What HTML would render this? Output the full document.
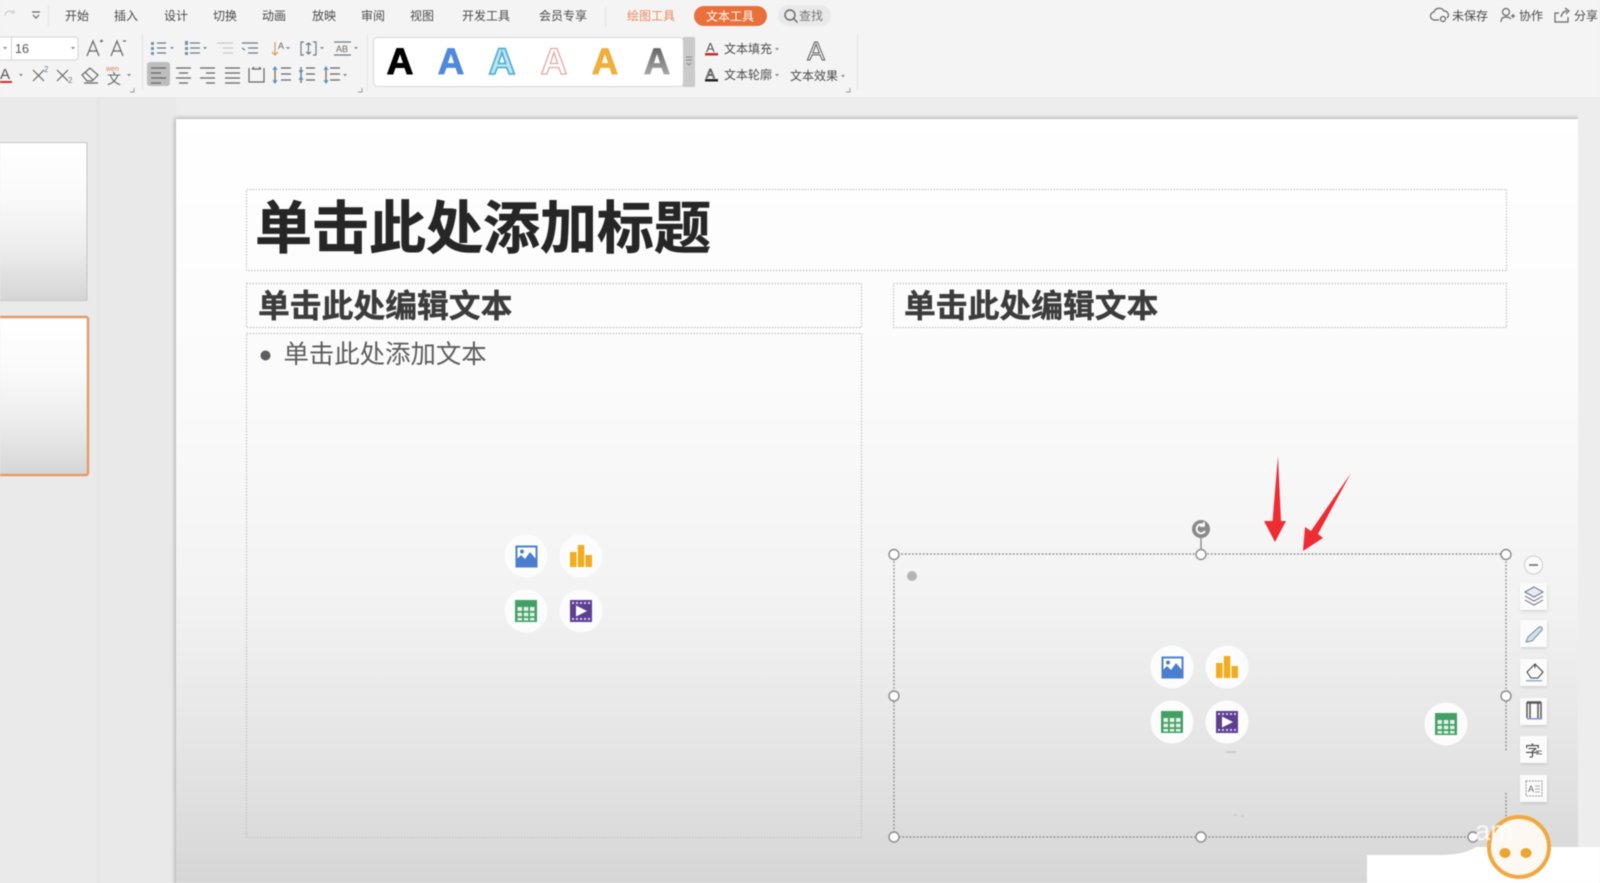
<!DOCTYPE html>
<html><head><meta charset="utf-8">
<style>
html,body{margin:0;padding:0;width:1600px;height:883px;overflow:hidden;background:#ededed}
svg{display:block;filter:blur(.45px)}
text{font-family:"Liberation Sans","Noto Sans CJK SC",sans-serif}
.t{font-size:12px;fill:#4a4a4a}
.i{fill:none;stroke:#666;stroke-width:1.2}
.b{fill:none;stroke:#6d7a86;stroke-width:1.2}
.c{fill:#888}
.d{fill:none;stroke:#c2c2c2;stroke-width:1.2;stroke-dasharray:1.5 1.5}
.e{fill:none;stroke:#808080;stroke-width:1.2;stroke-dasharray:1.8 1.8}
.h{fill:#fff;stroke:#8c8c8c;stroke-width:1.4}
</style></head><body>
<svg width="1600" height="883" viewBox="0 0 1600 883" xmlns="http://www.w3.org/2000/svg">
<defs>
<linearGradient id="sl" x1="0" y1="0" x2="0" y2="1"><stop offset="0" stop-color="#fff"/><stop offset=".35" stop-color="#fbfbfb"/><stop offset=".62" stop-color="#f3f3f3"/><stop offset=".82" stop-color="#e5e5e5"/><stop offset="1" stop-color="#d6d6d6"/></linearGradient>
<linearGradient id="th" x1="0" y1="0" x2="0" y2="1"><stop offset="0" stop-color="#fff"/><stop offset=".35" stop-color="#fafafa"/><stop offset=".7" stop-color="#ebebeb"/><stop offset="1" stop-color="#d5d5d5"/></linearGradient>
<linearGradient id="ga" x1="0" y1="0" x2="0" y2="1"><stop offset="0" stop-color="#555"/><stop offset="1" stop-color="#bbb"/></linearGradient>
<filter id="sf" x="-2%" y="-2%" width="104%" height="104%"><feGaussianBlur stdDeviation="2"/></filter>
<filter id="bl"><feGaussianBlur stdDeviation=".25"/></filter>
<filter id="bs" x="-30%" y="-30%" width="160%" height="160%"><feGaussianBlur stdDeviation="1.5"/></filter>
<g id="pic"><rect x="-9.500" y="-9.500" width="20" height="20" fill="#fff" stroke="#4a7fd0" stroke-width="2"/><path d="M-9 10V3L-5 -1L-1 3L4 -4L10 3V10Z" fill="#4a7fd0"/><circle cx="-4" cy="-4.500" r="2" fill="#4a7fd0"/></g>
<g id="bar" fill="#f2ac1e"><rect x="-11" y="-4" width="6.500" height="15"/><rect x="-3.200" y="-11" width="6.500" height="22"/><rect x="4.500" y="-1" width="6.500" height="12"/></g>
<g id="tbl"><rect x="-11" y="-11" width="22" height="22" fill="#43a065"/><path d="M-8.500 -4h4.500v4h-4.500zM-2.200 -4h4.500v4h-4.500zM4 -4h4.500v4h-4.500zM-8.500 1.700h4.500v3.600h-4.500zM-2.200 1.700h4.500v3.600h-4.500zM4 1.700h4.500v3.600h-4.500zM-8.500 7h4.500v2.500h-4.500zM-2.200 7h4.500v2.500h-4.500zM4 7h4.500v2.500h-4.500z" fill="#e4f2e9"/></g>
<g id="vid"><rect x="-11" y="-11" width="22" height="22" fill="#5d3f92"/><path d="M-5 -5.500L6 0L-5 5.500Z" fill="#fff"/><path d="M-9 -9h2v2h-2zM-5 -9h2v2h-2zM-1 -9h2v2h-2zM3 -9h2v2h-2zM7 -9h2v2h-2zM-9 7h2v2h-2zM-5 7h2v2h-2zM-1 7h2v2h-2zM3 7h2v2h-2zM7 7h2v2h-2z" fill="#d9cdee"/></g>
<circle id="cc" r="21.500" fill="#fcfcfc"/>
<path id="car" d="M-2 0h4l-2 2.400z" fill="#888"/>
<path id="crn" d="M4 0v4h-4" fill="none" stroke="#999" stroke-width="1"/>
</defs>

<!-- backgrounds -->
<rect width="1600" height="883" fill="#ededed"/>
<rect x="0" y="98" width="97" height="785" fill="#eaeaea"/>
<rect x="97" y="98" width="3" height="785" fill="#e5e5e5"/>
<rect x="100" y="98" width="76" height="785" fill="#e9e9e9"/>

<!-- ribbon -->
<rect width="1600" height="98" fill="#f4f4f4"/>
<g filter="url(#bl)">
<path d="M5 16a5 5 0 0 1 9-3M14 10v3h-3" fill="none" stroke="#d0d0d0" stroke-width="1.200"/>
<path class="i" d="M32 12h8M33 15l3 3 3-3" />
<rect x="48" y="5" width="1" height="22" fill="#e3e3e3"/>
<g class="t" style="font-size:12px">
<text x="65" y="20">开始</text><text x="114" y="20">插入</text><text x="164" y="20">设计</text><text x="213" y="20">切换</text><text x="262" y="20">动画</text><text x="312" y="20">放映</text><text x="361" y="20">审阅</text><text x="410" y="20">视图</text><text x="462" y="20">开发工具</text><text x="539" y="20">会员专享</text>
<text x="627" y="20" style="fill:#ea8a5e">绘图工具</text>
</g>
<rect x="605" y="7" width="1" height="20" fill="#e3e3e3"/>
<rect x="694" y="6" width="73" height="20" rx="10" fill="#e9703a"/>
<text x="706" y="20.500" class="t" style="fill:#fff">文本工具</text>
<rect x="778" y="5" width="53" height="21" rx="10.500" fill="#e9e9e9"/>
<circle cx="790" cy="15" r="5" fill="none" stroke="#666" stroke-width="1.400"/><path d="M793.500 18.500l4 4" stroke="#666" stroke-width="1.400"/>
<text x="799" y="20" class="t" style="fill:#777">查找</text>

<path class="i" d="M1439 20h-4a4 4 0 0 1-1-8 5.500 5.500 0 0 1 10-1 4 4 0 0 1 3 7"/><circle cx="1443" cy="19" r="2.500" class="i"/>
<text x="1452" y="20" class="t">未保存</text>
<circle cx="1506" cy="12" r="3.500" class="i"/><path class="i" d="M1501 22c0-4 2-5 5-5s4 1 5 2M1511 16h4M1513 14v4"/>
<text x="1519" y="20" class="t">协作</text>
<path class="i" d="M1559 13h-4v9h13v-5M1561 17c1-4 3-6 6-6M1565 8l4 3-3 3"/>
<text x="1574" y="20" class="t">分享</text>

<!-- font group -->
<rect x="-6" y="37" width="84" height="23" rx="3" fill="#fff" stroke="#d4d4d4"/>
<rect x="11" y="37" width="1" height="23" fill="#d4d4d4"/>
<use href="#car" x="5" y="47"/><use href="#car" x="73" y="47"/>
<text x="15" y="53" style="font-size:12.500px;fill:#555">16</text>
<path class="i" d="M87 56l6-15 6 15M89 51h8"/><path class="i" d="M100 41h3"/><path d="M101.500 39.500v3" stroke="#666"/>
<path class="i" d="M111 56l6-15 6 15M113 51h8M123 41h3"/>
<text x="0" y="79" style="font-size:15px;fill:#555">A</text><rect x="-1" y="81" width="13" height="2" fill="#d92b2b"/>
<use href="#car" x="21" y="74"/>
<path class="i" d="M33 70l11 11M44 70l-11 11"/><text x="44" y="72" style="font-size:8px;fill:#6d7a86">2</text>
<path class="i" d="M57 70l11 11M68 70l-11 11"/><text x="68" y="83" style="font-size:8px;fill:#6d7a86">2</text>
<path class="i" d="M82 75l8-7 8 7-6 6h-5zM85 72l8 8M84 83h14"/>
<text x="106" y="71" style="font-size:7px;fill:#c9875a">wen</text>
<text x="107" y="84" style="font-size:14px;fill:#666">文</text>
<use href="#car" x="129" y="74"/>
<use href="#crn" x="130" y="88"/>
<rect x="142" y="33" width="1" height="58" fill="#e4e4e4"/>

<!-- paragraph group row1 -->
<g class="b">
<path d="M157 43h9M157 48h9M157 53h9"/><path d="M190 43h10M190 48h10M190 53h10"/>
<path d="M217 43h16M223 48h10M223 53h10" stroke="#c8c8c8"/>
<path d="M242 43h16M248 48h10M248 53h10M242 48l3 2" />
<path d="M275 42v13M272 52l3 3 3-3" stroke="#d89a55"/>
<path d="M304 42h-3v13h3M313 42h3v13h-3M308.500 43v11M306 45l2.500-2 2.500 2M306 52l2.500 2 2.500-2"/>
<path d="M334 42h17M334 55h17"/>
</g>
<g fill="#6f93b8"><rect x="151" y="42" width="3" height="3"/><rect x="151" y="47" width="3" height="3"/><rect x="151" y="52" width="3" height="3"/>
<rect x="185" y="41" width="3" height="4"/><rect x="185" y="47" width="3" height="3"/><rect x="185" y="52" width="3" height="3"/></g>
<text x="278" y="49" style="font-size:9px;fill:#666">A</text>
<text x="336" y="52" style="font-size:9px;fill:#666">AB</text>
<use href="#car" x="172" y="47"/><use href="#car" x="205" y="47"/><use href="#car" x="288" y="47"/><use href="#car" x="322" y="47"/><use href="#car" x="356" y="47"/>
<!-- paragraph row2 -->
<rect x="147" y="62" width="23" height="24" rx="3" fill="#bdbdbd"/>
<g class="i">
<path d="M151 68h15M151 73h10M151 78h15M151 83h10"/>
<path d="M176 68h15M179 73h9M176 78h15M179 83h9"/>
<path d="M200 68h15M206 73h9M200 78h15M206 83h9"/>
<path d="M225 68h15M225 73h15M225 78h15M225 83h15"/>
<path d="M249 68v14h15V68M249 82h15M252 69h9M252 69l2-2M261 69l-2-2" />
<path d="M281 68h10M281 74h10M281 80h10M275 67v16"/>
<path d="M306 68h9M306 74h9M306 80h9M301 67v16"/>
<path d="M330 68h10M330 74h10M330 80h10M326 67v16"/>
</g>
<path d="M273 70l2-3 2 3M273 80l2 3 2-3" fill="none" stroke="#4a94d0" stroke-width="1.100"/>
<path d="M299 70l2 3 2-3M299 80l2-3 2 3" fill="none" stroke="#4a94d0" stroke-width="1.100"/>
<path d="M324 70l2-3 2 3M324 80l2 3 2-3" fill="none" stroke="#4a94d0" stroke-width="1.100"/>
<use href="#car" x="345" y="74"/>
<use href="#crn" x="358" y="88"/>
<rect x="367" y="33" width="1" height="58" fill="#e4e4e4"/>

<!-- word art gallery -->
<rect x="373.500" y="37.500" width="310" height="49" rx="4" fill="#fff" stroke="#d8d8d8"/>
<rect x="683" y="37" width="12" height="50" fill="#cacaca"/>
<path d="M686 57h6M686 60h6M687 63l2 2 2-2" fill="none" stroke="#777" stroke-width=".8"/>
<g style="font-size:37px;font-weight:700" text-anchor="middle">
<text x="400" y="74" fill="#000" stroke="#000" stroke-width="1">A</text>
<text x="451" y="74" fill="#4f88dc" stroke="#4f88dc" stroke-width=".8">A</text>
<text x="502" y="74" fill="#bfe6f4" stroke="#54b1d4" stroke-width="1.800">A</text>
<text x="554" y="74" fill="#fff" stroke="#e2a9a2" stroke-width="1.300">A</text>
<text x="605" y="74" fill="#efae3c" stroke="#efae3c" stroke-width=".8">A</text>
<text x="657" y="74" fill="url(#ga)" stroke="url(#ga)" stroke-width=".8">A</text>
</g>
<text x="706" y="52" style="font-size:13px;fill:#555">A</text><rect x="705" y="53" width="13" height="2.500" fill="#c92a2a"/>
<text x="724" y="53" class="t">文本填充</text><use href="#car" x="777" y="48"/>
<text x="706" y="78" style="font-size:13px;fill:#fff;stroke:#444;stroke-width:.8">A</text><rect x="705" y="79" width="13" height="2.500" fill="#222"/>
<text x="724" y="79" class="t">文本轮廓</text><use href="#car" x="777" y="74"/>
<text x="816" y="60" text-anchor="middle" style="font-size:26px;fill:#fff;stroke:#555;stroke-width:1">A</text>
<text x="790" y="80" class="t">文本效果</text><use href="#car" x="843" y="75"/>
<use href="#crn" x="846" y="88"/>
<rect x="857" y="33" width="1" height="58" fill="#e4e4e4"/>
</g>
<rect x="0" y="97" width="1600" height="1" fill="#e8e8e8"/>

<!-- thumbnails -->
<rect x="-3" y="142.500" width="90" height="158" fill="url(#th)" stroke="#c4c4c4"/>
<rect x="-3" y="317" width="91" height="158" rx="2" fill="url(#th)" stroke="#e69a6c" stroke-width="2.400"/>

<!-- slide -->
<rect x="175" y="118" width="1404" height="790" fill="#a8a8a8" filter="url(#sf)"/>
<rect x="176" y="119" width="1402" height="766" fill="url(#sl)"/>

<!-- placeholders -->
<rect class="d" x="246.500" y="189.500" width="1260" height="81"/>
<rect class="d" x="246.500" y="283.500" width="615" height="44"/>
<rect class="d" x="893.500" y="283.500" width="613" height="44"/>
<rect class="d" x="246.500" y="333.500" width="615" height="504"/>

<text x="255" y="248" style="font-size:57px;font-weight:700;fill:#262626;stroke:#262626;stroke-width:.6">单击此处添加标题</text>
<text x="258" y="317" style="font-size:31.800px;font-weight:700;fill:#3c3c3c;stroke:#3c3c3c;stroke-width:.4">单击此处编辑文本</text>
<text x="904" y="317" style="font-size:31.800px;font-weight:700;fill:#3c3c3c;stroke:#3c3c3c;stroke-width:.4">单击此处编辑文本</text>
<circle cx="265.500" cy="355.500" r="5" fill="#5c5c62"/>
<text x="283.500" y="363" style="font-size:25.400px;fill:#5c5c5c">单击此处添加文本</text>

<!-- left icons -->
<use href="#cc" x="526" y="556"/><use href="#cc" x="581" y="556"/><use href="#cc" x="526" y="611"/><use href="#cc" x="581" y="611"/>
<use href="#pic" x="526" y="556"/><use href="#bar" x="581" y="556"/><use href="#tbl" x="526" y="611"/><use href="#vid" x="581" y="611"/>

<!-- right selected box -->
<path class="e" d="M894 554H1506V752M1506 793V837M1473 837H894V554"/>
<circle cx="912" cy="576" r="5" fill="#b5b5b5"/>
<use href="#cc" x="1172" y="667"/><use href="#cc" x="1227" y="667"/><use href="#cc" x="1172" y="722"/><use href="#cc" x="1227" y="722"/><use href="#cc" x="1446" y="724"/>
<use href="#pic" x="1172" y="667"/><use href="#bar" x="1227" y="667"/><use href="#tbl" x="1172" y="722"/><use href="#vid" x="1227" y="722"/><use href="#tbl" x="1446" y="724"/>
<path d="M1226 752h10" stroke="#ccc" stroke-width="2"/>
<path d="M1234 815h3M1241 816h3" stroke="#ccc" stroke-width="2"/>
<path d="M1201 538v16" stroke="#8c8c8c" stroke-width="1.400"/>
<circle cx="1201" cy="529" r="9" fill="#8a8a8a"/>
<path d="M1205 531a4.500 4.500 0 1 1-1.500-6M1204 522v4h-4" fill="none" stroke="#fff" stroke-width="1.800"/>
<circle class="h" cx="894" cy="554.500" r="5"/><circle class="h" cx="1201" cy="554.500" r="5"/><circle class="h" cx="1506" cy="554.500" r="5"/>
<circle class="h" cx="894" cy="696" r="5"/><circle class="h" cx="1506" cy="696" r="5"/>
<circle class="h" cx="894" cy="837" r="5"/><circle class="h" cx="1201" cy="837" r="5"/><circle class="h" cx="1473" cy="837" r="5"/>

<!-- arrows -->
<path d="M1278 456L1281 521H1286L1275 542L1264 521H1272.500Z" fill="#ee2c34"/>
<path d="M1351 473L1318 534L1323 538L1303 551L1305 527L1311 531Z" fill="#ee2c34"/>

<!-- side tools -->
<circle cx="1533.500" cy="565" r="9" fill="#fbfbfb" stroke="#ccc"/><path d="M1529 565h9" stroke="#666" stroke-width="1.500"/>
<g>
<rect x="1521" y="585" width="26" height="26" fill="#999" opacity=".45" filter="url(#bs)"/><rect x="1520" y="583" width="27" height="27" fill="#fbfbfb"/>
<rect x="1521" y="622" width="26" height="26" fill="#999" opacity=".45" filter="url(#bs)"/><rect x="1520" y="620" width="27" height="27" fill="#fbfbfb"/>
<rect x="1521" y="661" width="26" height="26" fill="#999" opacity=".45" filter="url(#bs)"/><rect x="1520" y="659" width="27" height="27" fill="#fbfbfb"/>
<rect x="1521" y="700" width="26" height="26" fill="#999" opacity=".45" filter="url(#bs)"/><rect x="1520" y="698" width="27" height="27" fill="#fbfbfb"/>
<rect x="1521" y="738" width="26" height="26" fill="#999" opacity=".45" filter="url(#bs)"/><rect x="1520" y="736" width="27" height="27" fill="#fbfbfb"/>
<rect x="1521" y="777" width="26" height="26" fill="#999" opacity=".45" filter="url(#bs)"/><rect x="1520" y="775" width="27" height="27" fill="#fbfbfb"/>
</g>
<path d="M1534 587l9 5-9 5-9-5z" fill="#e4edf6" stroke="#667" stroke-width="1"/><path d="M1525 596l9 5 9-5M1525 600l9 5 9-5" fill="none" stroke="#667" stroke-width="1"/>
<path d="M1526 642l2-5 11-10c2-1 4 1 3 3l-10 11z" fill="#cfe0ef" stroke="#7b8a99" stroke-width="1"/>
<path d="M1527 672l8-8 8 8-5 6h-7zM1535 664v4" fill="none" stroke="#444" stroke-width="1.100"/><rect x="1526" y="680" width="16" height="1.500" fill="#8bb2d2"/>
<path d="M1527 718v-15h14v15M1530 703v15M1538 703v15M1527 702h14" fill="none" stroke="#555" stroke-width="1.500"/><rect x="1527" y="718" width="15" height="1.500" fill="#8a8fd0"/>
<text x="1525" y="756" style="font-size:15px;fill:#444">字</text><path d="M1536 751h6M1536 754h6" stroke="#777"/>
<rect x="1526" y="781" width="16" height="15" fill="none" stroke="#999" stroke-width="1" stroke-dasharray="2 1"/>
<text x="1528" y="792" style="font-size:9px;fill:#666">A</text><path d="M1535 786h5M1535 789h5M1535 792h5" stroke="#aaa"/>

<!-- watermark corner -->
<path d="M1367 883V855H1440Q1464 855 1476 847H1600V883Z" fill="#fff"/>
<rect x="1578" y="98" width="22" height="749" fill="#ededed"/>
<circle cx="1519" cy="847" r="30" fill="#fdf9f2" stroke="#f1a840" stroke-width="4"/>
<ellipse cx="1505" cy="853" rx="5.500" ry="5" fill="#eea52f"/><ellipse cx="1526" cy="853" rx="5.500" ry="5" fill="#eea52f"/>
<text x="1475" y="840" textLength="38" lengthAdjust="spacingAndGlyphs" style="font-size:28px;fill:#fff;opacity:.85">am</text>
</svg>
</body></html>
